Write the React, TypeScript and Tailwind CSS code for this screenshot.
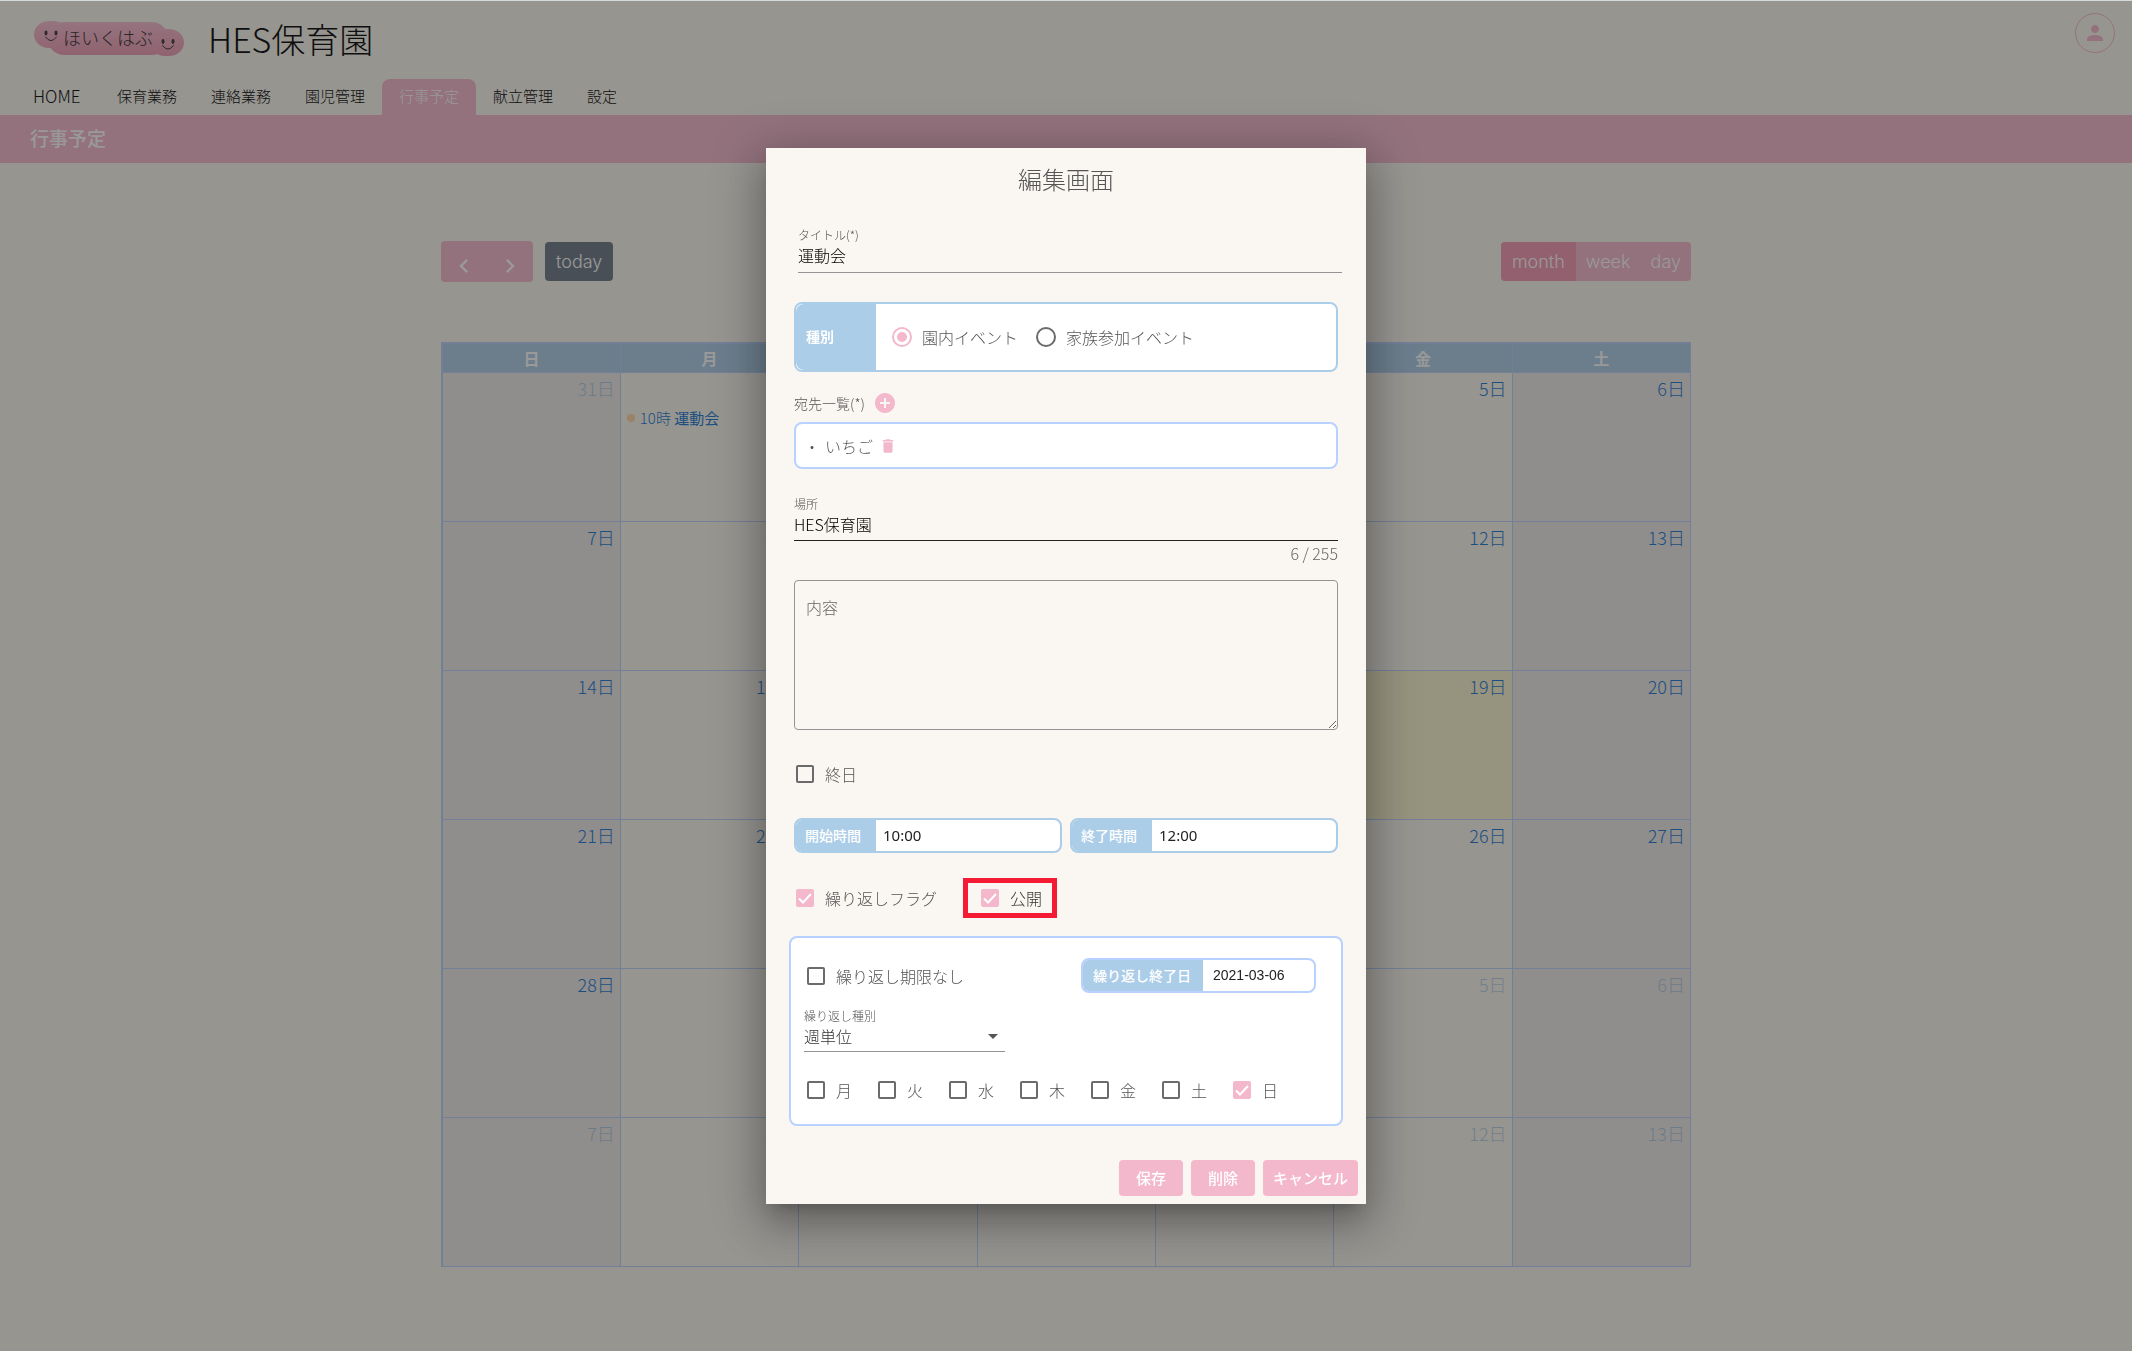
import type { ReactNode } from "react";
import { MdAddCircle, MdArrowDropDown, MdChevronLeft, MdChevronRight, MdDelete, MdPerson } from "react-icons/md";

const tabs = ["HOME", "保育業務", "連絡業務", "園児管理", "行事予定", "献立管理", "設定"];
const weekdays = ["日", "月", "火", "水", "木", "金", "土"];
const weeks = [
  [31, 1, 2, 3, 4, 5, 6],
  [7, 8, 9, 10, 11, 12, 13],
  [14, 15, 16, 17, 18, 19, 20],
  [21, 22, 23, 24, 25, 26, 27],
  [28, 1, 2, 3, 4, 5, 6],
  [7, 8, 9, 10, 11, 12, 13],
];

function isOtherMonth(week: number, day: number) {
  return (week === 0 && day > 20) || (week >= 4 && day < 20);
}

function Logo() {
  return (
    <div className="relative h-[36px] w-[150px]">
      <svg viewBox="0 0 150 36" className="absolute inset-0 h-full w-full">
        <defs>
          <linearGradient id="logo" x1="0" y1="0" x2="0" y2="36" gradientUnits="userSpaceOnUse">
            <stop offset="0" stopColor="#f6bdd0" />
            <stop offset="1" stopColor="#ee98b1" />
          </linearGradient>
        </defs>
        <g fill="url(#logo)">
          <rect x="0" y="0" width="34" height="27" rx="15" ry="13.5" />
          <rect x="14" y="1" width="120" height="33" rx="16" />
          <rect x="116" y="8" width="34" height="27" rx="15" ry="13.5" />
        </g>
        <g fill="#3a3038">
          <ellipse cx="12" cy="12" rx="1.5" ry="2.4" />
          <ellipse cx="22" cy="12" rx="1.5" ry="2.4" />
          <ellipse cx="129" cy="20.5" rx="1.5" ry="2.4" />
          <ellipse cx="139" cy="20.5" rx="1.5" ry="2.4" />
        </g>
        <g fill="none" stroke="#3a3038" strokeLinecap="round">
          <path d="M11.500 16q5.500 7.500 11 0M128.500 24.500q5.500 7.500 11 0" />
        </g>
      </svg>
      <span className="absolute left-[29px] top-[3px] text-[18px] leading-[26px] text-[#2c242c]">ほいくはぶ</span>
    </div>
  );
}

function Header() {
  return (
    <header>
      <div className="flex h-[78px] items-start justify-between pl-[34px] pr-[17px]">
        <div className="flex items-center gap-[24px] pt-[16px]">
          <Logo />
          <h1 className="text-[34px] leading-[44px] text-black">HES保育園</h1>
        </div>
        <button aria-label="アカウント" className="mt-[12px] grid size-[40px] place-items-center rounded-full border border-[#f4b8cc] text-[#f4b8cc]">
          <MdPerson size={24} />
        </button>
      </div>
      <nav className="flex pl-[16px]">
        {tabs.map((tab) => (
          <a
            key={tab}
            href="#"
            className={
              tab === "行事予定"
                ? "h-[36px] rounded-t-[8px] bg-[#f4b8cc] px-[17px] text-[15px] leading-[34px] text-white"
                : tab === "HOME"
                  ? "h-[36px] px-[17px] text-[17px] leading-[34px] text-black"
                  : "h-[36px] px-[17px] text-[15px] leading-[34px] text-black"
            }
          >
            {tab === "HOME" ? <span className="inline-block min-w-[50px]">{tab}</span> : tab}
          </a>
        ))}
      </nav>
      <h2 className="h-[48px] bg-[#f4b8cc] pl-[30px] text-[19px] font-medium leading-[45px] text-white">行事予定</h2>
    </header>
  );
}

function Toolbar() {
  return (
    <div className="flex items-center justify-between font-['Inter'] text-[18px] text-white">
      <div className="flex items-center gap-[12px]">
        <div className="flex h-[41px] rounded-[4px] bg-[#f4b8cc]">
          <button aria-label="前" className="grid w-[46px] place-items-center pt-[8px]">
            <MdChevronLeft size={28} />
          </button>
          <button aria-label="次" className="grid w-[46px] place-items-center pt-[8px]">
            <MdChevronRight size={28} />
          </button>
        </div>
        <button className="h-[39px] rounded-[4px] bg-[#6c7785] px-[11px]">today</button>
      </div>
      <div className="flex h-[39px] overflow-hidden rounded-[4px] bg-[#f4b8cc]">
        <button className="bg-[#f497b4] px-[11px]">month</button>
        <button className="px-[10px]">week</button>
        <button className="px-[10px]">day</button>
      </div>
    </div>
  );
}

function Calendar() {
  return (
    <table className="mt-[60px] w-full table-fixed border-collapse border border-l-2 border-t-2 border-[#b8d0fb]">
      <thead>
        <tr className="h-[29px] bg-[#accde8]">
          {weekdays.map((day) => (
            <th key={day} className="border border-[#b8d0fb] p-0 text-[16px] font-bold leading-[26px] text-white">
              {day}
            </th>
          ))}
        </tr>
      </thead>
      <tbody>
        {weeks.map((week, row) => (
          <tr key={row} className="h-[149px]">
            {week.map((day, col) => (
              <td
                key={col}
                className={
                  col === 0 || col === 6
                    ? "border border-[#b8d0fb] bg-[#edebe8] p-0 align-top"
                    : row === 2 && day === 19
                      ? "border border-[#b8d0fb] bg-[#faf5cf] p-0 align-top"
                      : "border border-[#b8d0fb] p-0 align-top"
                }
              >
                <div
                  className={
                    isOtherMonth(row, day)
                      ? "pr-[5px] text-right text-[18px] leading-[30px] text-[#1976d2] opacity-30"
                      : "pr-[5px] text-right text-[18px] leading-[30px] text-[#1976d2]"
                  }
                >
                  {day}日
                </div>
                {row === 0 && col === 1 && (
                  <a href="#" className="mt-[4px] flex items-center gap-[5px] pl-[6px] text-[15px] leading-[22px] text-[#1976d2]">
                    <span className="size-[8px] shrink-0 rounded-full bg-[#ffd5a0]" />
                    <span>
                      10時 <b>運動会</b>
                    </span>
                  </a>
                )}
              </td>
            ))}
          </tr>
        ))}
      </tbody>
    </table>
  );
}

function Checkbox({ children, checked = false, dark = false }: { children: ReactNode; checked?: boolean; dark?: boolean }) {
  return (
    <label className={dark ? "flex items-center gap-[11px] text-[16px] leading-[24px] text-[#333]" : "flex items-center gap-[11px] text-[16px] leading-[24px] text-[#555]"}>
      <span className="grid size-[18px] place-items-center">
        <input
          type="checkbox"
          defaultChecked={checked}
          className="peer col-start-1 row-start-1 size-[18px] appearance-none rounded-[2px] border-2 border-[#6b6b6b] checked:border-[#f4b8cc] checked:bg-[#f4b8cc]"
        />
        <svg viewBox="0 0 18 18" className="pointer-events-none col-start-1 row-start-1 hidden size-[18px] peer-checked:block">
          <path d="M3 9.5l4 4 8-8.5" fill="none" stroke="#fff" strokeWidth="2" />
        </svg>
      </span>
      {children}
    </label>
  );
}

function Radio({ label, checked = false }: { label: string; checked?: boolean }) {
  return (
    <label className="flex items-center gap-[10px]">
      <span className="grid size-[20px] place-items-center">
        <input
          type="radio"
          name="kind"
          defaultChecked={checked}
          className="peer col-start-1 row-start-1 size-[20px] appearance-none rounded-full border-2 border-[#6b6b6b] checked:border-[#f4b8cc]"
        />
        <span className="pointer-events-none col-start-1 row-start-1 hidden size-[10px] rounded-full bg-[#f4b8cc] peer-checked:block" />
      </span>
      {label}
    </label>
  );
}

function TimeField({ label, value }: { label: string; value: string }) {
  return (
    <label className="flex h-[35px] min-w-0 flex-1 overflow-hidden rounded-[8px] border-2 border-[#accde8] bg-white">
      <span className="w-[80px] shrink-0 bg-[#accde8] pl-[9px] text-[14px] font-medium leading-[31px] text-white">{label}</span>
      <input defaultValue={value} className="min-w-0 flex-1 px-[7px] font-['Noto_Sans'] text-[15px] font-normal text-[#222] outline-none" />
    </label>
  );
}

function EditDialog() {
  return (
    <div
      role="dialog"
      aria-label="編集画面"
      className="w-[600px] bg-[#faf7f2] px-[28px] pb-[8px] text-[16px] text-[#555] shadow-[0_11px_15px_-7px_rgba(0,0,0,0.2),0_24px_38px_3px_rgba(0,0,0,0.14),0_9px_46px_8px_rgba(0,0,0,0.22)]"
    >
      <h2 className="pt-[15px] text-center text-[24px] leading-[32px]">編集画面</h2>

      <label className="-mr-[4px] ml-[4px] mt-[32px] block border-b border-[#949494] pb-[5px] text-[12px] leading-[16px]">
        タイトル(*)
        <input defaultValue="運動会" className="block w-full text-[16px] leading-[24px] text-black outline-none" />
      </label>

      <fieldset className="mt-[29px] flex h-[70px] overflow-hidden rounded-[8px] border-2 border-[#accde8] bg-white">
        <span className="w-[80px] bg-[#accde8] pl-[10px] text-[14px] font-bold leading-[65px] text-white">種別</span>
        <div className="flex items-center gap-[18px] pl-[16px]">
          <Radio label="園内イベント" checked />
          <Radio label="家族参加イベント" />
        </div>
      </fieldset>

      <div className="mt-[19px] flex items-center gap-[8px] text-[14px] leading-[24px]">
        宛先一覧(*)
        <button aria-label="宛先を追加" className="text-[#f4b8cc]">
          <MdAddCircle size={24} />
        </button>
      </div>
      <div className="mt-[7px] flex h-[47px] items-center rounded-[8px] border-2 border-[#b8d1ff] bg-white pl-[8px]">
        ・
        <span className="ml-[5px]">いちご</span>
        <button aria-label="いちごを削除" className="ml-[6px] text-[#f4b8cc]">
          <MdDelete size={18} />
        </button>
      </div>

      <label className="mt-[27px] block border-b border-[#222] pb-[4px] text-[12px] leading-[16px]">
        場所
        <input defaultValue="HES保育園" className="block w-full text-[16px] leading-[24px] text-black outline-none" />
      </label>
      <p className="mt-[2px] text-right text-[16px] leading-[20px] text-[#666]">6 / 255</p>

      <textarea
        aria-label="内容"
        placeholder="内容"
        className="mt-[17px] block h-[150px] w-full rounded-[4px] border border-[#949494] px-[11px] py-[14px] leading-[24px] outline-none placeholder:text-[#666]"
      />

      <div className="ml-[2px] mt-[32px] flex">
        <Checkbox>終日</Checkbox>
      </div>

      <div className="mt-[32px] flex gap-[8px]">
        <TimeField label="開始時間" value="10:00" />
        <TimeField label="終了時間" value="12:00" />
      </div>

      <div className="ml-[2px] mt-[25px] flex items-center gap-[26px]">
        <Checkbox checked>繰り返しフラグ</Checkbox>
        <div className="border-5 border-[#f61b34] py-[3px] pl-[13px] pr-[10px]">
          <Checkbox checked dark>
            公開
          </Checkbox>
        </div>
      </div>

      <div className="-mx-[5px] mt-[18px] h-[190px] rounded-[8px] border-2 border-[#b8d1ff] bg-white px-[13px] pt-[20px]">
        <div className="flex items-center justify-between pl-[3px] pr-[12px]">
          <Checkbox>繰り返し期限なし</Checkbox>
          <label className="flex h-[35px] w-[235px] overflow-hidden rounded-[8px] border-2 border-[#b8d1ff]">
            <span className="w-[120px] shrink-0 bg-[#accde8] pl-[10px] text-[14px] font-medium leading-[31px] text-white">繰り返し終了日</span>
            <input defaultValue="2021-03-06" className="min-w-0 flex-1 px-[10px] font-['Liberation_Sans'] text-[14px] text-[#222] outline-none" />
          </label>
        </div>
        <label className="mt-[15px] grid w-[201px] items-center border-b border-[#949494] pb-[3px] text-[12px] leading-[16px]">
          繰り返し種別
          <select className="col-start-1 row-start-2 w-full appearance-none text-[16px] leading-[24px] text-[#333] outline-none">
            <option>週単位</option>
          </select>
          <MdArrowDropDown size={24} className="pointer-events-none col-start-1 row-start-2 justify-self-end" />
        </label>
        <div className="mt-[26px] flex gap-[26px] pl-[3px]">
          {["月", "火", "水", "木", "金", "土", "日"].map((day) => (
            <Checkbox key={day} checked={day === "日"}>
              {day}
            </Checkbox>
          ))}
        </div>
      </div>

      <div className="-mr-[20px] mt-[34px] flex justify-end gap-[8px] text-[15px] font-medium text-white">
        <button className="h-[36px] rounded-[4px] bg-[#f4b8cc] px-[17px]">保存</button>
        <button className="h-[36px] rounded-[4px] bg-[#f4b8cc] px-[17px]">削除</button>
        <button className="h-[36px] rounded-[4px] bg-[#f4b8cc] px-[10px]">キャンセル</button>
      </div>
    </div>
  );
}

export default function App() {
  return (
    <div className="min-h-screen bg-[#faf7ef] font-['Noto_Sans_CJK_JP',sans-serif] font-light">
      <div className="pt-px">
        <Header />
        <main className="mx-auto max-w-[1250px] pt-[78px]">
          <Toolbar />
          <Calendar />
        </main>
      </div>
      <div className="fixed inset-0 flex items-center justify-center border-t border-[#d5dade] bg-[#212121]/46">
        <EditDialog />
      </div>
    </div>
  );
}
